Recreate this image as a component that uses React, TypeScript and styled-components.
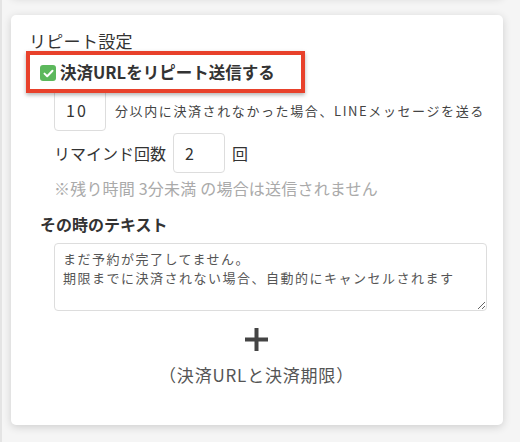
import React from 'react';
import styled, {createGlobalStyle} from 'styled-components';

const GlobalStyle = createGlobalStyle`
  html, body {
    margin: 0;
    padding: 0;
    background: #f5f5f5;
    font-family: 'Noto Sans CJK JP', 'Noto Sans', sans-serif;
    color: #333;
  }
  * { box-sizing: border-box; }
`;

const Page = styled.div`
  min-height: 442px;
  border-left: 2px solid #e4e4e4;
  padding: 0 17px 0 9px;
  overflow: hidden;
`;

const Card = styled.div`
  background: #fff;
  border-radius: 5px;
  box-shadow: 0 2px 8px rgba(0, 0, 0, 0.16);
  width: 492px;
`;

const PrevCard = styled(Card)`
  height: 40px;
  margin-top: -44px;
`;

const SettingCard = styled(Card)`
  margin-top: 19px;
  padding: 14px 16px 39px 15px;
  display: flex;
  flex-direction: column;
`;

const Title = styled.div`
  font-size: 17px;
  line-height: 22px;
  padding-left: 3px;
  margin-top: 1px;
  letter-spacing: 0.3px;
`;

const Highlight = styled.label`
  position: relative;
  z-index: 1;
  align-self: flex-start;
  display: flex;
  align-items: center;
  gap: 4px;
  height: 42px;
  margin-top: -1px;
  padding: 0 26px 0 10px;
  border: 4px solid #e8412b;
  box-shadow: 0 2px 4px rgba(0, 0, 0, 0.3);
  background: #fff;
  font-size: 16.5px;
  font-weight: 700;
  color: #333;
`;

const Check = styled.span`
  width: 16px;
  height: 16px;
  border-radius: 3px;
  background: #5cb85c;
  display: flex;
  align-items: center;
  justify-content: center;
  margin-top: 2px;
`;

const Row = styled.div<{$top: number}>`
  display: flex;
  align-items: center;
  margin-left: 28px;
  margin-top: ${(p) => p.$top}px;
`;

const NumBox = styled.div<{$h: number}>`
  width: 52px;
  height: ${(p) => p.$h}px;
  border: 1px solid #ddd;
  border-radius: 4px;
  padding-left: 11px;
  display: flex;
  align-items: center;
  font-size: 16px;
  letter-spacing: 2px;
  color: #333;
  background: #fff;
  flex-shrink: 0;
`;

const SmallText = styled.span`
  font-size: 13px;
  letter-spacing: 1.6px;
  color: #444;
  margin-left: 9px;
  white-space: nowrap;
`;

const Label = styled.span<{$gap?: number}>`
  font-size: 16px;
  color: #333;
  margin: 0 ${(p) => p.$gap ?? 0}px;
`;

const Note = styled.div`
  margin: 4px 0 0 28px;
  font-size: 16px;
  line-height: 22px;
  letter-spacing: 0.2px;
  color: #aaa;
`;

const SubTitle = styled.div`
  margin: 14px 0 0 14px;
  font-size: 16px;
  line-height: 22px;
  font-weight: 700;
  color: #333;
`;

const MessageArea = styled.textarea`
  margin: 8px 0 0 28px;
  width: 433px;
  height: 68px;
  border: 1px solid #ddd;
  border-radius: 4px;
  padding: 5px 8px;
  font-family: 'Noto Sans CJK JP', 'Noto Sans', sans-serif;
  font-size: 13px;
  line-height: 19px;
  letter-spacing: 1.5px;
  color: #555;
  resize: both;
  outline: none;
`;

const AddButton = styled.div`
  margin-top: 17px;
  display: flex;
  flex-direction: column;
  align-items: center;
  gap: 13px;
  cursor: pointer;
`;

const Caption = styled.div`
  font-size: 17px;
  line-height: 22px;
  letter-spacing: 0.8px;
  color: #555;
`;

export default function App() {
  return (
    <>
      <GlobalStyle />
      <Page>
        <PrevCard />
        <SettingCard>
          <Title>リピート設定</Title>
          <Highlight>
            <Check>
              <svg width="11" height="9" viewBox="0 0 11 9">
                <path d="M1.5 4.6 L4.2 7.2 L9.5 1.8" fill="none" stroke="#fff" strokeWidth="2" strokeLinecap="round" strokeLinejoin="round" />
              </svg>
            </Check>
            決済URLをリピート送信する
          </Highlight>
          <Row $top={-4}>
            <NumBox $h={42}>10</NumBox>
            <SmallText>分以内に決済されなかった場合、LINEメッセージを送る</SmallText>
          </Row>
          <Row $top={2}>
            <Label>リマインド回数</Label>
            <Label $gap={7}>
              <NumBox $h={40}>2</NumBox>
            </Label>
            <Label>回</Label>
          </Row>
          <Note>※残り時間 3分未満 の場合は送信されません</Note>
          <SubTitle>その時のテキスト</SubTitle>
          <MessageArea
            readOnly
            defaultValue={'まだ予約が完了してません。\n期限までに決済されない場合、自動的にキャンセルされます'}
          />
          <AddButton>
            <svg width="23" height="23" viewBox="0 0 23 23">
              <rect x="9.5" y="0" width="4" height="23" fill="#444" />
              <rect x="0" y="9.5" width="23" height="4" fill="#444" />
            </svg>
            <Caption>（決済URLと決済期限）</Caption>
          </AddButton>
        </SettingCard>
      </Page>
    </>
  );
}
